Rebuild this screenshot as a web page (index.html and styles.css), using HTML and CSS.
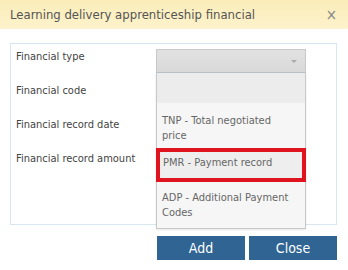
FILE: index.html
```html
<!DOCTYPE html>
<html>
<head>
<meta charset="utf-8">
<link rel="stylesheet" href="styles.css">
</head>
<body>
<div class="dialog">
  <div class="header">
    <span class="title">Learning delivery apprenticeship financial</span>
    <span class="close">×</span>
  </div>
  <div class="body">
    <div class="box">
      <div class="labels">
        <div class="label">Financial type</div>
        <div class="label">Financial code</div>
        <div class="label">Financial record date</div>
        <div class="label">Financial record amount</div>
      </div>
      <div class="field">
        <div class="select"><span class="arrow"></span></div>
        <div class="list">
          <div class="item empty"></div>
          <div class="item tnp">TNP - Total negotiated price</div>
          <div class="item selected">PMR - Payment record</div>
          <div class="item">ADP - Additional Payment Codes</div>
        </div>
      </div>
    </div>
    <div class="buttons">
      <button class="btn">Add</button>
      <button class="btn">Close</button>
    </div>
  </div>
</div>
</body>
</html>
```

FILE: styles.css
```css
* { box-sizing: border-box; }
html, body { margin: 0; padding: 0; }
body {
  width: 348px;
  height: 270px;
  background: #ffffff;
  font-family: "DejaVu Sans Condensed", "DejaVu Sans", sans-serif;
  color: #444;
  overflow: hidden;
}
.header {
  height: 29px;
  background: linear-gradient(#fbedb9, #fdf2cc);
  display: flex;
  align-items: center;
  justify-content: space-between;
  padding: 0 10px 0 10px;
}
.title {
  font-size: 13px;
  color: #555;
}
.close {
  font-size: 15px;
  color: #888;
  margin-right: 1px;
}
.body {
  padding: 14px 11px 0 10px;
}
.box {
  position: relative;
  height: 182px;
  border: 1px solid #d8e6f0;
  display: flex;
  padding: 5px 0 0 5px;
}
.labels {
  width: 140px;
}
.label {
  font-size: 11px;
  color: #444;
  height: 34px;
  line-height: 16px;
}
.field {
  position: relative;
  width: 150px;
}
.select {
  height: 24px;
  background: linear-gradient(#e2e2e2, #d9d9d9);
  border: 1px solid #c8c8c8;
  border-bottom-color: #b8c0c8;
  position: relative;
}
.arrow {
  position: absolute;
  right: 8px;
  top: 10px;
  width: 0;
  height: 0;
  border-left: 3px solid transparent;
  border-right: 3px solid transparent;
  border-top: 3px solid #aaa;
}
.list {
  position: absolute;
  top: 24px;
  left: 0;
  width: 150px;
  background: #f6f6f6;
  border: 1px solid #c8c8c8;
  border-top: none;
  box-shadow: 0 1px 2px rgba(0,0,0,0.1);
  z-index: 2;
}
.item {
  font-size: 11px;
  color: #666;
  line-height: 15px;
  padding: 8px 6px 8px 5px;
}
.item.empty {
  height: 30px;
  background: #ececec;
  padding: 0;
}
.item.tnp {
  padding: 10px 28px 5px 5px;
}
.item.selected {
  background: #eeeeee;
  outline: 4px solid #e0141e;
  outline-offset: -4px;
  padding: 7px 7px 8px 7px;
  height: 34px;
  margin-left: -1px;
  margin-right: -1px;
}
.buttons {
  display: flex;
  justify-content: flex-end;
  gap: 4px;
  margin-top: 11px;
}
.btn {
  width: 88px;
  height: 24px;
  background: #2f6493;
  color: #fff;
  border: none;
  font-family: "DejaVu Sans Condensed", "DejaVu Sans", sans-serif;
  font-size: 14px;
  padding: 0;
}
```
